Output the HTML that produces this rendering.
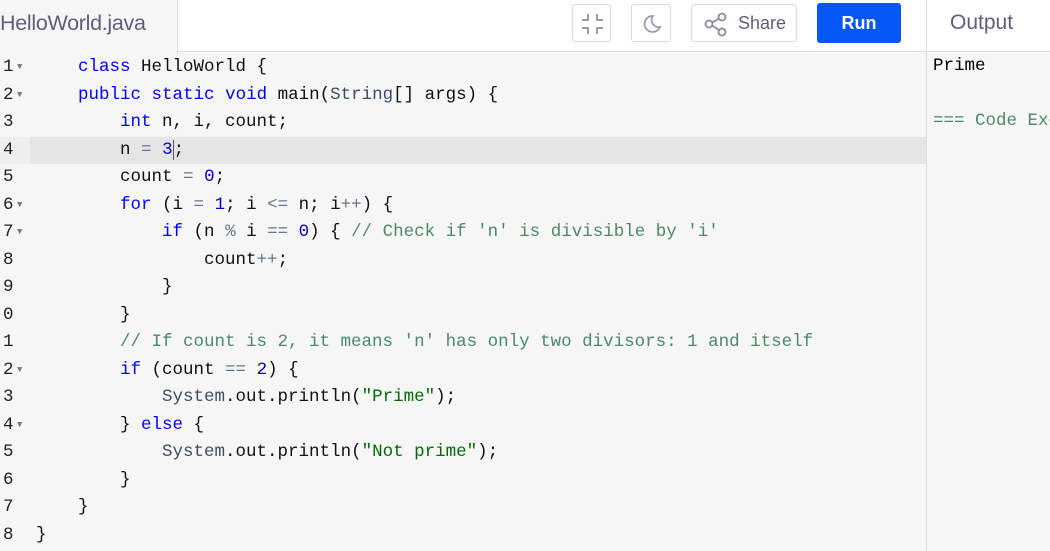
<!DOCTYPE html>
<html><head><style>
*{margin:0;padding:0;box-sizing:border-box}
body{width:1050px;height:551px;overflow:hidden;background:#f6f6f6;font-family:"Liberation Sans",sans-serif;position:relative}
.hdr{position:absolute;left:0;top:0;width:1050px;height:52px;background:#fff;border-bottom:1px solid #d8dde8}
.tab{position:absolute;left:0;top:0;width:178px;height:53px;background:#f6f6f6;border-right:1px solid #d8dde8;font-size:21.5px;color:#5e5e7a;line-height:46px;letter-spacing:-0.3px;white-space:nowrap;overflow:hidden}
.btn{position:absolute;top:4px;height:38px;border:1px solid #d6d9e2;border-radius:3px;background:#fff}
.run{position:absolute;left:817px;top:3px;width:84px;height:40px;background:#0556f3;border-radius:3px;color:#fff;font-weight:bold;font-size:18px;text-align:center;line-height:40px}
.outh{position:absolute;left:926px;top:0;width:124px;height:52px;border-left:1px solid #d8dde8;font-size:21px;color:#5e5e7a;line-height:45px;padding-left:23px}
.outp{position:absolute;left:926px;top:52px;width:124px;height:499px;border-left:1px solid #d8dde8;background:#f6f6f6;font-family:"Liberation Mono",monospace;font-size:17.5px;white-space:pre;padding-left:6px;padding-top:1px;overflow:hidden}
.code{position:absolute;left:0;top:54px;width:926px;font-family:"Liberation Mono",monospace;font-size:17.5px}
.ln{height:27.5px;line-height:27.5px;position:relative;white-space:pre;color:#111}
.ln .g{position:absolute;left:3px;top:0;width:30px;color:#222}
.ln .g i{font-style:normal;font-size:9px;color:#777;position:absolute;left:14px;top:0}
.ln .t{position:absolute;left:36px}
.hl{background:#e4e4e4}
.hl .g{background:#eeeeee;left:0;padding-left:3px;height:27.5px}
.k{color:#0000ff}.n{color:#0000cd}.o{color:#687687}.c{color:#4c886b}.s{color:#036a07}.ty{color:#3e4d66}
</style></head><body>
<div class="hdr">
<div class="tab">HelloWorld.java</div>
<div class="btn" style="left:572px;width:39px"><svg width="39" height="38" viewBox="0 0 39 38"><g stroke="#9a9ab0" stroke-width="2" fill="none"><path d="M15 9v6H9M24 9v6h6M15 29v-6H9M24 29v-6h6"/></g></svg></div>
<div class="btn" style="left:631px;width:40px"><svg width="40" height="38" viewBox="0 0 40 38"><path d="M21 11a8 8 0 1 0 7 11 7 7 0 0 1-7-11z" stroke="#9a9ab0" stroke-width="1.8" fill="none"/></svg></div>
<div class="btn" style="left:691px;width:106px"><svg width="30" height="38" viewBox="0 0 30 38" style="position:absolute;left:8px;top:0"><g stroke="#8a8aa3" stroke-width="1.8" fill="none"><circle cx="22" cy="12" r="3.5"/><circle cx="9" cy="19" r="3.5"/><circle cx="22" cy="27" r="3.5"/><path d="M12 17.5l7-4M12 20.5l7 4.5"/></g></svg><span style="position:absolute;left:46px;top:0;line-height:36px;font-size:18px;color:#5e5e7a">Share</span></div>
<div class="run">Run</div>
<div class="outh">Output</div>
</div>
<div class="code">
<div class="ln"><span class="g">1<i>▼</i></span><span class="t">    <span class="k">class</span> HelloWorld {</span></div>
<div class="ln"><span class="g">2<i>▼</i></span><span class="t">    <span class="k">public</span> <span class="k">static</span> <span class="k">void</span> main(<span class="ty">String</span>[] args) {</span></div>
<div class="ln"><span class="g">3</span><span class="t">        <span class="k">int</span> n, i, count;</span></div>
<div class="ln hl"><span class="g">4</span><span class="t">        n <span class="o">=</span> <span class="n">3</span><span style="border-left:1px solid #555">;</span></span></div>
<div class="ln"><span class="g">5</span><span class="t">        count <span class="o">=</span> <span class="n">0</span>;</span></div>
<div class="ln"><span class="g">6<i>▼</i></span><span class="t">        <span class="k">for</span> (i <span class="o">=</span> <span class="n">1</span>; i <span class="o">&lt;=</span> n; i<span class="o">++</span>) {</span></div>
<div class="ln"><span class="g">7<i>▼</i></span><span class="t">            <span class="k">if</span> (n <span class="o">%</span> i <span class="o">==</span> <span class="n">0</span>) { <span class="c">// Check if 'n' is divisible by 'i'</span></span></div>
<div class="ln"><span class="g">8</span><span class="t">                count<span class="o">++</span>;</span></div>
<div class="ln"><span class="g">9</span><span class="t">            }</span></div>
<div class="ln"><span class="g">0</span><span class="t">        }</span></div>
<div class="ln"><span class="g">1</span><span class="t">        <span class="c">// If count is 2, it means 'n' has only two divisors: 1 and itself</span></span></div>
<div class="ln"><span class="g">2<i>▼</i></span><span class="t">        <span class="k">if</span> (count <span class="o">==</span> <span class="n">2</span>) {</span></div>
<div class="ln"><span class="g">3</span><span class="t">            <span class="ty">System</span>.out.println(<span class="s">"Prime"</span>);</span></div>
<div class="ln"><span class="g">4<i>▼</i></span><span class="t">        } <span class="k">else</span> {</span></div>
<div class="ln"><span class="g">5</span><span class="t">            <span class="ty">System</span>.out.println(<span class="s">"Not prime"</span>);</span></div>
<div class="ln"><span class="g">6</span><span class="t">        }</span></div>
<div class="ln"><span class="g">7</span><span class="t">    }</span></div>
<div class="ln"><span class="g">8</span><span class="t">}</span></div>
</div>
<div class="outp"><div style="line-height:27.5px">Prime</div><div style="line-height:27.5px">&nbsp;</div><div style="line-height:27.5px;color:#4c886b">=== Code Execution Successful ===</div></div>
</body></html>
